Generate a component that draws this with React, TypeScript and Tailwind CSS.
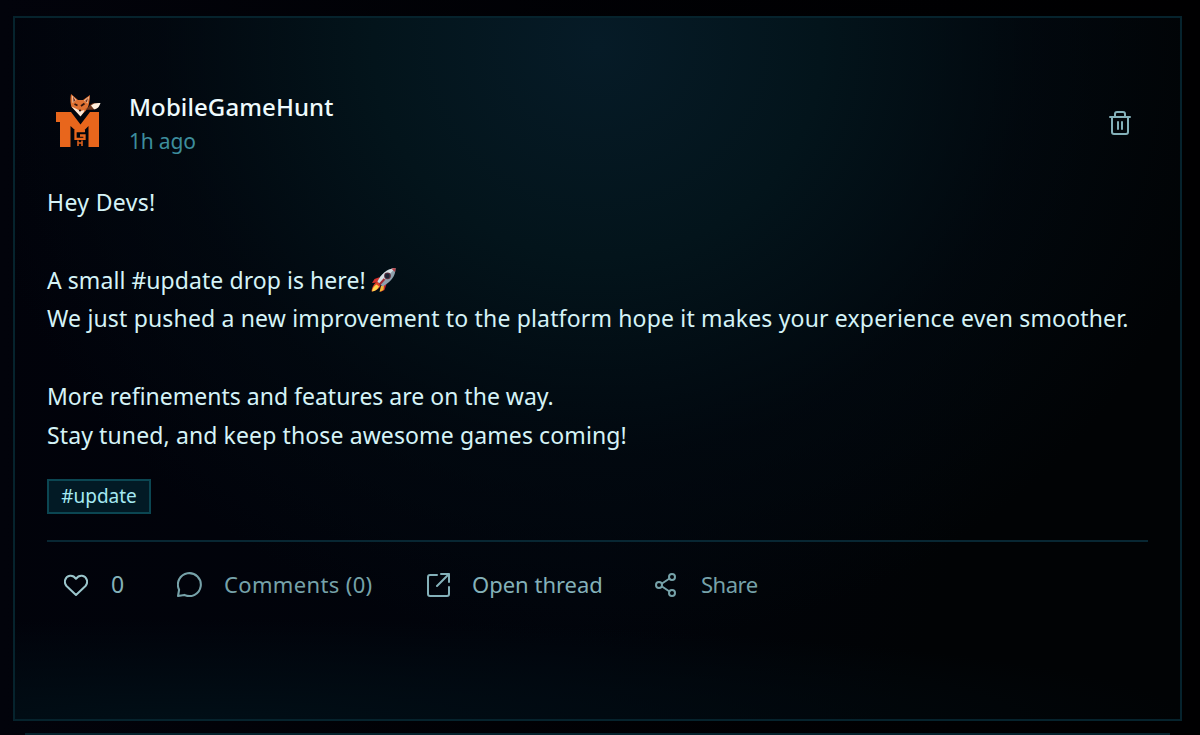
import type { ReactNode, SVGProps } from "react";

const lines = [
	{ text: "Hey Devs!", className: "tracking-[0.35px]" },
	{ text: "", className: "" },
	{ text: "A small #update drop is here!", className: "tracking-[0.06px]", rocket: true },
	{
		text: "We just pushed a new improvement to the platform hope it makes your experience even smoother.",
		className: "tracking-[0.165px]",
	},
	{ text: "", className: "" },
	{ text: "More refinements and features are on the way.", className: "tracking-[0px]" },
	{ text: "Stay tuned, and keep those awesome games coming!", className: "tracking-[0.115px]" },
];

function Icon({ children, ...props }: SVGProps<SVGSVGElement>) {
	return (
		<svg
			viewBox="0 0 24 24"
			fill="none"
			stroke="currentColor"
			strokeWidth={2}
			strokeLinecap="round"
			strokeLinejoin="round"
			aria-hidden="true"
			{...props}
		>
			{children}
		</svg>
	);
}

function Rocket() {
	return (
		<svg viewBox="0 0 26 26" className="ml-[5px] h-[26px] w-[26px] shrink-0" aria-hidden="true">
			<path d="M9 10 3.5 12 1 16l5.500-.5z" fill="#d8322e" />
			<path d="m15.500 17-2 6-4 2 .5-6z" fill="#c9252b" />
			<path d="M7 14.500C3 16 1 20 .5 24.500c3.500-.5 7.500-2 9-6z" fill="#e0442a" />
			<path d="M5.500 17.500C3 19 1.500 21 1 24.500c3-.5 5.500-2 7-5z" fill="#ffd84d" />
			<path d="m10 19-1.500 6 4-2 .5-5z" fill="#f3b630" />
			<path d="M6.500 14.500C10 7.500 15.500 2 24.500 1c.2 8-4.500 14-13 18.500z" fill="#8fa0ac" />
			<path d="M6.500 14.500C10 7.500 15.500 2 24.500 1L9 17z" fill="#d5dee3" />
			<path d="M20.500 1.700C21.700 1.300 23 1.100 24.500 1c.1 1.500-.1 2.800-.5 4z" fill="#b54048" />
			<circle cx="16.500" cy="8.800" r="3.400" fill="#5c3040" />
			<circle cx="16.300" cy="8.900" r="2.300" fill="#1c2536" />
			<path d="m8.500 17.500 5-5.500" stroke="#a52b32" strokeWidth="2" />
		</svg>
	);
}

function Avatar() {
	return (
		<svg viewBox="0 0 50 58" className="ml-[7px] h-[58px] w-[50px] shrink-0" aria-label="MobileGameHunt">
			{/* letter block with the small G and H hanging in the middle */}
			<path d="M2 21h15l9.500 12.500L36 21h9v35H34.500V35L30 39.500H21.500L16.500 35v21H6V31H2z" fill="#e8661c" />
			<path d="M31 40.200H21.500v7.600h9V44.500H26" fill="none" stroke="#e8661c" strokeWidth="2.300" />
			<path d="M24 49.500V55M28 49.500V55M24 52h4" fill="none" stroke="#d95f1c" strokeWidth="1.600" />
			{/* fox */}
			<path d="M17 3c-1 6-.5 9 .5 13l5 5 4 4 5-5c3-3 4-8 4.500-16l-7 5h-5z" fill="#df7132" />
			<path d="m18 4.500 4.500 4.500-4 3zM35 5.500l-5 4 3.500 3z" fill="#f3c9a5" />
			<path d="m19 5.500 2.500 4-2 1.500zM34 7l-3 3 2 1.500z" fill="#7a3220" />
			<path d="m17.500 15.500 6 3 3 1.500 4-1-1 2.500-3 4z" fill="#fbe9d8" />
			<path d="m27 15 3.500-2.500M20.500 13l3 1.500" stroke="#32150f" strokeWidth="1.800" />
			<circle cx="26" cy="19.500" r="1.100" fill="#32150f" />
			<path d="M31 18c4 0 4-5.500 9-6h6c-1.500 4.500-3 6-6 6.500-4 .5-6 .5-9-.5z" fill="#6e351b" />
			<path d="M37 14.500c2-2 5-2.700 9.500-2.500-1.500 4.500-3.500 6-6.500 6.300z" fill="#fff0de" />
		</svg>
	);
}

function Action({ icon, label, className }: { icon: ReactNode; label: string; className: string }) {
	return (
		<button type="button" className={`flex items-center leading-8 ${className}`}>
			{icon}
			<span className="-mt-0.5">{label}</span>
		</button>
	);
}

export default function App() {
	return (
		<main className="h-[735px] w-[1200px] overflow-hidden bg-[#010208] bg-linear-to-r from-[#02030b] to-[#000001] px-[13px] pt-4 font-['Noto_Sans','Open_Sans',sans-serif]">
			<article className="h-[705px] w-[1169px] border-2 border-[#06232d] bg-[radial-gradient(ellipse_640px_600px_at_50%_4%,#061b27_0%,#03141b_35%,#020b1299_68%,transparent_100%),radial-gradient(ellipse_1000px_100px_at_15%_100%,#010e16_0%,transparent_100%),linear-gradient(110deg,#01020a_0%,#01040b_55%,#010305_80%)] px-8">
				<header className="flex h-[165px] items-start justify-between pt-[73px]">
					<div className="flex">
						<Avatar />
						<div className="-mt-px ml-[25px] flex flex-col">
							<h1 className="text-[24px] leading-[34px] font-medium tracking-[0.09px] text-[#effbfd]">MobileGameHunt</h1>
							<time className="text-[21px] leading-[34px] tracking-[-0.2px] text-[#3d8d9c]">1h ago</time>
						</div>
					</div>
					<button type="button" aria-label="Delete post" className="mt-[18px] mr-4 text-[#84b1b9]">
						<Icon className="h-7 w-6">
							<path d="M2 6h20M7 6V3q0-2 2-2h6q2 0 2 2v3M4 6v15q0 2 2 2h12q2 0 2-2V6M10 11v7M14 11v7" />
						</Icon>
					</button>
				</header>
				<section className="text-[23px] leading-[38.800px] text-[#d5f3f7]">
					{lines.map((line, i) => (
						<p key={i} className={`flex h-[38.800px] items-center whitespace-nowrap ${line.className}`}>
							{line.text}
							{line.rocket && <Rocket />}
						</p>
					))}
				</section>
				<div className="mt-6 flex h-[35px] w-[104px] items-center justify-center border-2 border-[#0b4652] bg-[#021a25] text-[19px] text-[#a5e9f2]">
					#update
				</div>
				<footer className="mt-[26px] flex border-t-2 border-[#082733] pt-7 pl-[17px] text-[22px] text-[#84b1b9]">
					<Action
						className="w-[113px] gap-[23px] text-[23px]"
						label="0"
						icon={
							<Icon className="h-6 w-6 text-[#9bc6cc]">
								<path d="M12 22 2.500 13C-.5 9.500.8 3.500 6 2.800c2.600-.3 4.500.9 6 3 1.500-2.100 3.400-3.300 6-3C23.200 3.500 24.500 9.500 21.500 13z" />
							</Icon>
						}
					/>
					<Action
						className="w-[249px] gap-[22px] tracking-[0.35px] text-[#76a2a9]"
						label="Comments (0)"
						icon={
							<Icon className="h-[25px] w-[25px]">
								<path d="M2 17a11 11 0 1 1 5 5l-6 1z" />
							</Icon>
						}
					/>
					<Action
						className="w-[228px] gap-[22px]"
						label="Open thread"
						icon={
							<Icon className="h-6 w-6">
								<path d="M11 2H4Q2 2 2 4v17q0 2 2 2h17q2 0 2-2v-7M15 1h8v8M23 1 11 13" />
							</Icon>
						}
					/>
					<Action
						className="gap-[23px] tracking-[-0.5px] text-[#76a2a9]"
						label="Share"
						icon={
							<Icon className="h-6 w-6">
								<circle cx="18" cy="4" r="3" />
								<circle cx="5" cy="12" r="3" />
								<circle cx="18" cy="20" r="3" />
								<path d="m8 10.500 7.500-5M8 13.500l7.500 5" />
							</Icon>
						}
					/>
				</footer>
			</article>
			<div className="mx-3 mt-3 h-10 w-[1145px] border-2 border-[#06232d]" />
		</main>
	);
}
